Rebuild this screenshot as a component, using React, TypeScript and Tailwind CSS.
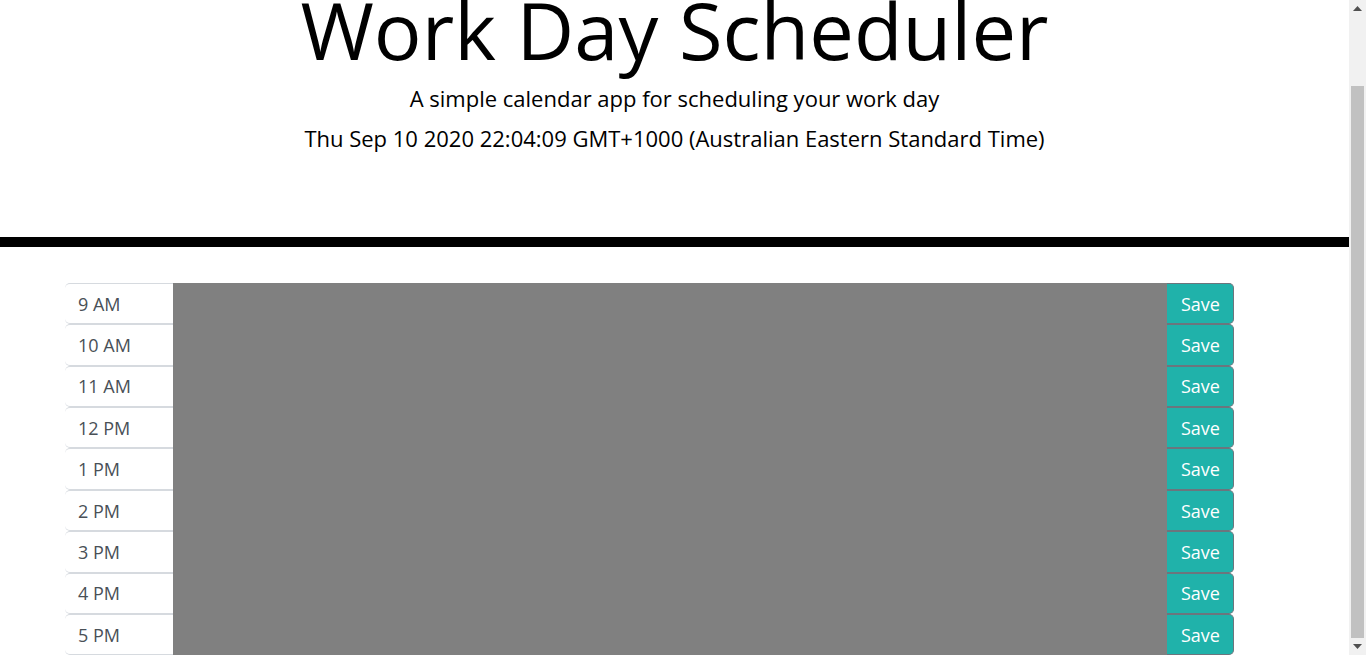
import type { ReactNode } from "react";

const hours = ["9 AM", "10 AM", "11 AM", "12 PM", "1 PM", "2 PM", "3 PM", "4 PM", "5 PM"];

function TimeBlock({ label }: { label: string }) {
  return (
    <div className="flex h-[41.4px]">
      <div className="flex w-[108px] shrink-0 items-center rounded-l-[5px] border-y border-[#d6dadf] bg-white pl-[13px] pt-[1px] text-[18px] text-[#495057]">
        {label}
      </div>
      <textarea
        className="flex-1 resize-none border-0 bg-[#808080] p-0 outline-none"
        aria-label={`${label} description`}
      />
      <button
        type="button"
        className="flex w-[67px] shrink-0 items-center justify-center rounded-r-[5px] border border-l-0 border-[#6c757d] bg-[#20b2aa] pl-[1px] pt-[1px] text-[18px] text-white"
      >
        Save
      </button>
    </div>
  );
}

function Arrow({ up }: { up?: boolean }): ReactNode {
  return (
    <div className="flex h-[17px] items-center justify-center">
      <svg width="9" height="5" viewBox="0 0 9 5">
        <path d={up ? "M0 5 L4.5 0 L9 5 Z" : "M0 0 L4.5 5 L9 0 Z"} fill="#505050" />
      </svg>
    </div>
  );
}

export default function App() {
  return (
    <div
      className="flex h-[655px] w-full overflow-hidden bg-white text-black"
      style={{ fontFamily: '"Open Sans", "Noto Sans", sans-serif' }}
    >
      <div className="min-w-0 flex-1 overflow-hidden">
        <div className="-mt-[82px]">
          <header className="border-b-[10px] border-black pb-[88px] pt-[72.4px] text-center">
            <h1 className="text-[79.5px] font-normal leading-none">Work Day Scheduler</h1>
            <p className="mt-[17px] text-[22px] leading-none">
              A simple calendar app for scheduling your work day
            </p>
            <p className="mt-[18px] text-[22px] leading-none">
              Thu Sep 10 2020 22:04:09 GMT+1000 (Australian Eastern Standard Time)
            </p>
          </header>
          <div className="ml-[65px] mt-[36px] w-[1169px]">
            {hours.map((h) => (
              <TimeBlock key={h} label={h} />
            ))}
          </div>
        </div>
      </div>
      <div className="flex w-[17px] shrink-0 flex-col bg-[#f1f1f1]">
        <Arrow up />
        <div className="flex-1 px-[2px] pt-[69px]">
          <div className="h-[552px] bg-[#c1c1c1]" />
        </div>
        <Arrow />
      </div>
    </div>
  );
}
